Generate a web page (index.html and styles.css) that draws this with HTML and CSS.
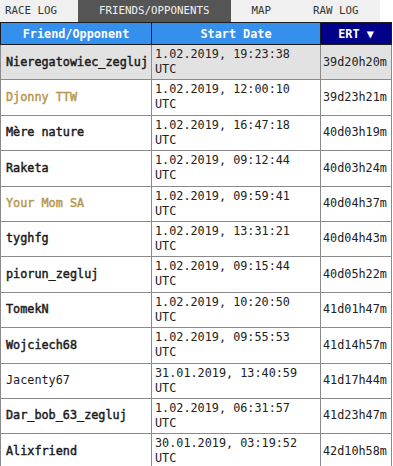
FILE: index.html
```html
<!DOCTYPE html>
<html>
<head>
<meta charset="utf-8">
<link rel="stylesheet" href="styles.css">
</head>
<body>
<div class="tabs">
  <div class="tab first">RACE LOG</div>
  <div class="tab active">FRIENDS/OPPONENTS</div>
  <div class="tab">MAP</div>
  <div class="tab">RAW LOG</div>
</div>
<table class="grid">
  <colgroup>
    <col class="c-name"><col class="c-date"><col class="c-ert">
  </colgroup>
  <thead>
    <tr>
      <th class="h-name">Friend/Opponent</th>
      <th class="h-date">Start Date</th>
      <th class="h-ert">ERT ▼</th>
    </tr>
  </thead>
  <tbody>
    <tr class="sel"><td class="name">Nieregatowiec_zegluj</td><td class="date">1.02.2019, 19:23:38<br>UTC</td><td class="ert">39d20h20m</td></tr>
    <tr><td class="name gold">Djonny TTW</td><td class="date">1.02.2019, 12:00:10<br>UTC</td><td class="ert">39d23h21m</td></tr>
    <tr><td class="name">Mère nature</td><td class="date">1.02.2019, 16:47:18<br>UTC</td><td class="ert">40d03h19m</td></tr>
    <tr><td class="name">Raketa</td><td class="date">1.02.2019, 09:12:44<br>UTC</td><td class="ert">40d03h24m</td></tr>
    <tr><td class="name gold">Your Mom SA</td><td class="date">1.02.2019, 09:59:41<br>UTC</td><td class="ert">40d04h37m</td></tr>
    <tr><td class="name">tyghfg</td><td class="date">1.02.2019, 13:31:21<br>UTC</td><td class="ert">40d04h43m</td></tr>
    <tr><td class="name">piorun_zegluj</td><td class="date">1.02.2019, 09:15:44<br>UTC</td><td class="ert">40d05h22m</td></tr>
    <tr><td class="name">TomekN</td><td class="date">1.02.2019, 10:20:50<br>UTC</td><td class="ert">41d01h47m</td></tr>
    <tr><td class="name">Wojciech68</td><td class="date">1.02.2019, 09:55:53<br>UTC</td><td class="ert">41d14h57m</td></tr>
    <tr><td class="name plain">Jacenty67</td><td class="date">31.01.2019, 13:40:59<br>UTC</td><td class="ert">41d17h44m</td></tr>
    <tr><td class="name">Dar_bob_63_zegluj</td><td class="date">1.02.2019, 06:31:57<br>UTC</td><td class="ert">41d23h47m</td></tr>
    <tr><td class="name">Alixfriend</td><td class="date">30.01.2019, 03:19:52<br>UTC</td><td class="ert">42d10h58m</td></tr>
    <tr><td class="name">&nbsp;</td><td class="date">&nbsp;<br>&nbsp;</td><td class="ert">&nbsp;</td></tr>
  </tbody>
</table>
</body>
</html>
```
FILE: styles.css
```css
html, body {
  margin: 0;
  padding: 0;
  background: #ffffff;
}
body {
  font-family: "DejaVu Sans Mono", "Liberation Mono", monospace;
  color: #1a1a1a;
  width: 393px;
  height: 466px;
  overflow: hidden;
}
.tabs {
  display: flex;
  height: 22px;
  width: 380px;
  background: #f0f0f0;
}
.tab {
  padding: 0 21px;
  font-size: 10.8px;
  line-height: 22px;
  color: #333333;
  white-space: nowrap;
}
.tab.first {
  padding-left: 5px;
}
.tab.active {
  background: #555555;
  color: #f2f2f2;
}
.grid {
  border-collapse: collapse;
  width: 391px;
  table-layout: fixed;
}
.c-name { width: 151px; }
.c-date { width: 169px; }
.c-ert { width: 71px; }
.grid th {
  height: 21px;
  padding: 0;
  font-size: 11.8px;
  font-weight: bold;
  color: #ffffff;
  background: #3490ec;
  border: 1px solid #1c1c1c;
  text-align: center;
  line-height: 20px;
}
.grid th.h-ert {
  background: #000088;
}
.grid td {
  border: 1px solid #8a8a8a;
  padding: 2px 3px 2.4px;
  font-size: 11.8px;
  line-height: 15px;
  vertical-align: middle;
  white-space: nowrap;
  overflow: hidden;
}
.grid td.name {
  font-weight: normal;
  -webkit-text-stroke: 0.45px currentColor;
  padding-left: 5px;
  color: #1a1a1a;
}
.grid td.name.gold {
  color: #b8964f;
}
.grid td.name.plain {
  -webkit-text-stroke: 0;
}
.grid td.date {
  color: #222222;
}
.grid td.ert {
  padding-left: 2px;
  color: #222222;
}
.grid tr.sel td {
  background: #e2e2e2;
}
```
